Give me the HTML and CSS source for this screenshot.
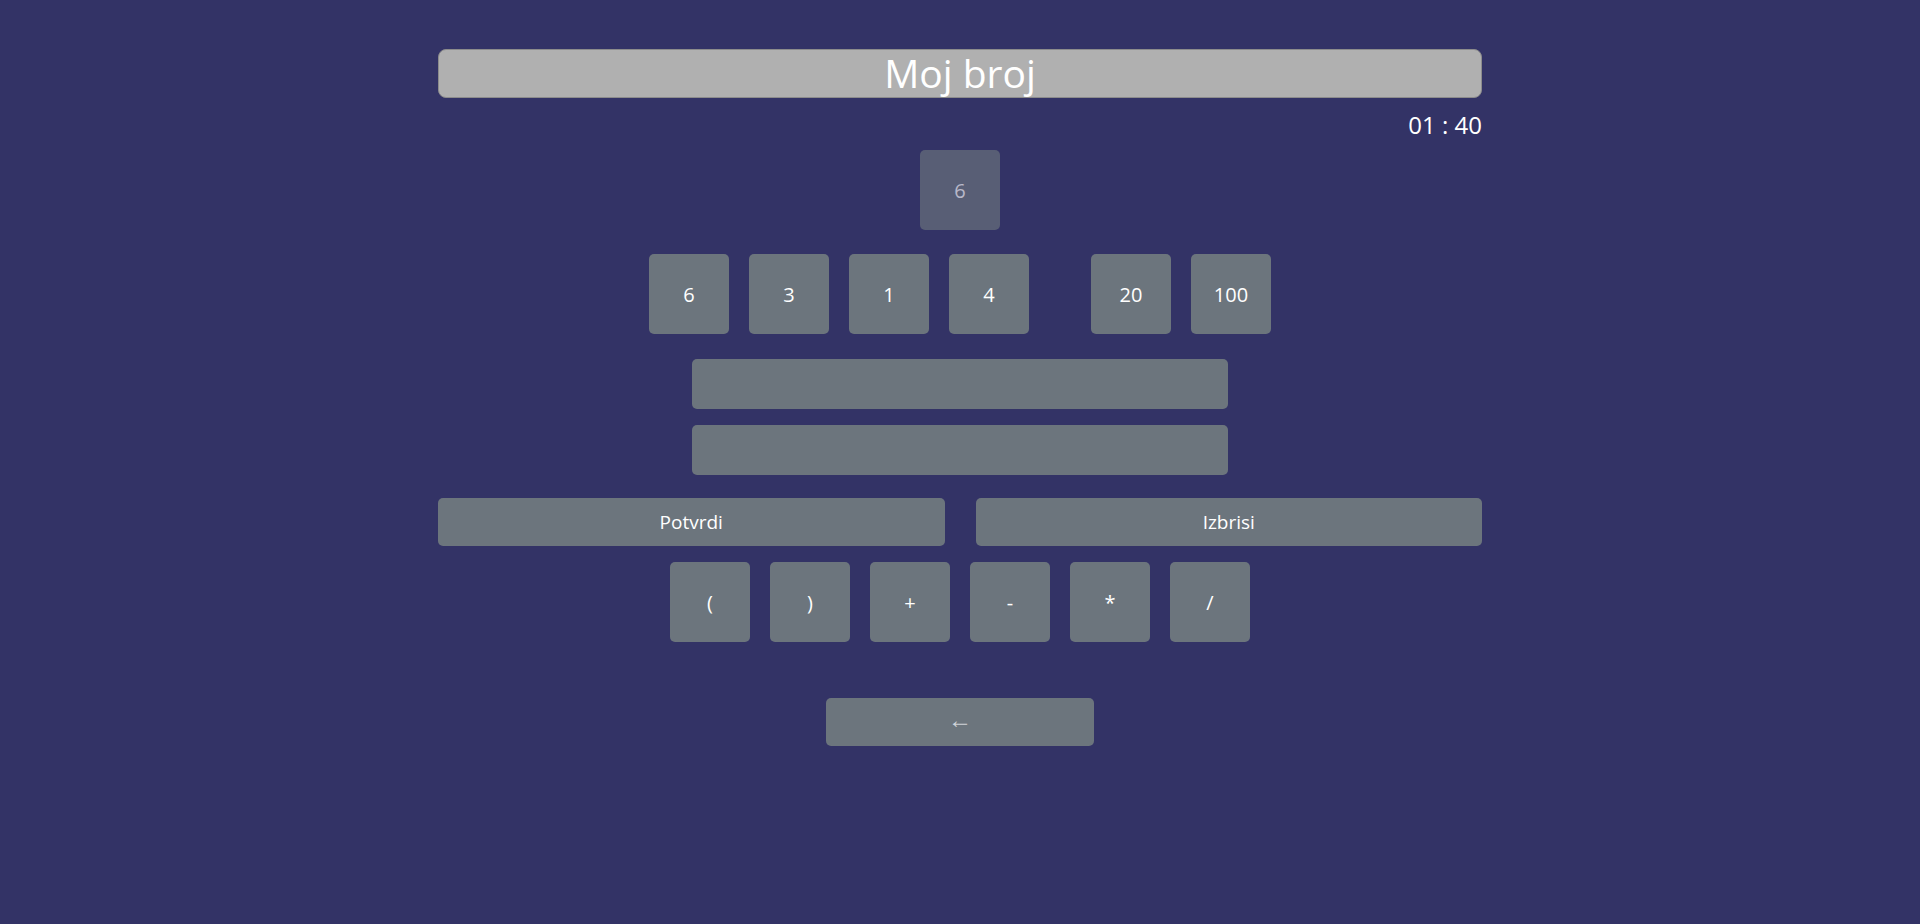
FILE: index.html
```html
<!DOCTYPE html>
<html lang="en">
  <head>
    <meta charset="UTF-8" />
    <meta name="viewport" content="width=device-width, initial-scale=1.0" />
    <title>Moj broj</title>
    <link rel="stylesheet" href="styles.css">
  </head>
  <body>
    <div class="game">
      <div class="title">Moj broj</div>
      <div class="timer">01 : 40</div>

      <div class="target-row">
        <button class="tile" disabled>6</button>
      </div>

      <div class="numbers-row">
        <div class="group">
          <button class="tile">6</button>
          <button class="tile">3</button>
          <button class="tile">1</button>
          <button class="tile">4</button>
        </div>
        <div class="group">
          <button class="tile">20</button>
          <button class="tile">100</button>
        </div>
      </div>

      <div class="fields">
        <input class="field" type="text" readonly />
        <input class="field" type="text" readonly />
      </div>

      <div class="actions">
        <button class="wide">Potvrdi</button>
        <button class="wide">Izbrisi</button>
      </div>

      <div class="ops-row">
        <button class="tile op">(</button>
        <button class="tile op">)</button>
        <button class="tile op">+</button>
        <button class="tile op">-</button>
        <button class="tile op">*</button>
        <button class="tile op">/</button>
      </div>

      <div class="back-row">
        <button class="back">&larr;</button>
      </div>
    </div>
  </body>
</html>
```

FILE: styles.css
```css
body {
  font-family: "Open Sans", "Noto Sans", sans-serif;
  background: #333366;
  color: white;
  margin: 0;
  padding: 0;
}

.game {
  width: 1044px;
  margin: 0 auto;
  padding-top: 49px;
}

.title {
  height: 47px;
  line-height: 46px;
  background: #b0b0b0;
  border: 1px solid #8c8c8c;
  border-radius: 8px;
  text-align: center;
  font-size: 39px;
}

.timer {
  text-align: right;
  font-size: 24px;
  line-height: 30px;
  margin-top: 12px;
  margin-bottom: 10px;
}

button {
  font-family: inherit;
  background: #6c757d;
  color: white;
  border: none;
  border-radius: 5px;
  padding: 0;
  cursor: pointer;
}

.tile {
  width: 80px;
  height: 80px;
  font-size: 20px;
}

.tile:disabled {
  opacity: 0.65;
  cursor: default;
}

.target-row {
  display: flex;
  justify-content: center;
}

.numbers-row {
  display: flex;
  justify-content: center;
  gap: 62px;
  margin-top: 24px;
}

.group {
  display: flex;
  gap: 20px;
}

.fields {
  display: flex;
  flex-direction: column;
  align-items: center;
  gap: 16px;
  margin-top: 25px;
}

.field {
  width: 536px;
  height: 50px;
  box-sizing: border-box;
  background: #6c757d;
  border: none;
  border-radius: 5px;
  color: white;
  font-size: 18px;
  padding: 0 12px;
}

.actions {
  display: flex;
  gap: 31px;
  margin-top: 23px;
}

.wide {
  flex: 1;
  height: 48px;
  font-size: 19px;
}

.ops-row {
  display: flex;
  justify-content: center;
  gap: 20px;
  margin-top: 16px;
}

.op {
  font-size: 20px;
}

.back-row {
  display: flex;
  justify-content: center;
  margin-top: 56px;
}

.back {
  width: 268px;
  height: 48px;
  font-size: 24px;
  padding-bottom: 8px;
  color: #d0d3d8;
}
```
